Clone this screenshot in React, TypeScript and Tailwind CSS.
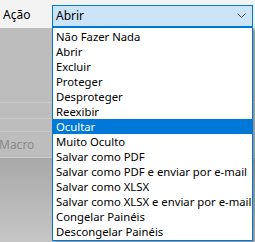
import React from "react";

const items = [
  "Não Fazer Nada",
  "Abrir",
  "Excluir",
  "Proteger",
  "Desproteger",
  "Reexibir",
  "Ocultar",
  "Muito Oculto",
  "Salvar como PDF",
  "Salvar como PDF e enviar por e-mail",
  "Salvar como XLSX",
  "Salvar como XLSX e enviar por e-mail",
  "Congelar Painéis",
  "Descongelar Painéis",
];

export default function App() {
  return (
    <div
      className="relative w-[255px] h-[242px] overflow-hidden bg-[#bdbdbd] text-[11.3px] text-black"
      style={{ fontFamily: '"Noto Sans", "Open Sans", sans-serif' }}
    >
      <div className="h-[28px] bg-[#f3f3f3] flex items-center">
        <span className="pl-[3px] pt-[2px] text-[12px]">Ação</span>
      </div>
      <div className="h-[74px]" />
      <div className="h-[16px] border-t border-[#c9c9c9]" />
      <div className="h-[13px] border-t border-[#c9c9c9]" />
      <div className="h-[27px] border-t border-[#c9c9c9] border-b flex items-center text-[#8a8a8a] text-[12px]">
        <span className="-ml-[1px]">Macro</span>
      </div>
      <div className="h-[84px] bg-gradient-to-b from-[#a9a9a9] to-[#c6c6c6]" />

      {/* combo box */}
      <div className="absolute left-[52px] top-[5px] w-[201px] h-[23px] bg-[#cce4f7] border border-[#0078d7] border-b-2 flex items-center justify-between pl-[3px] pr-[5px] text-[12px]">
        <span>Abrir</span>
        <svg width="9" height="6" viewBox="0 0 9 6" className="mr-[1px]">
          <path d="M0.5 0.5 L4.5 4.5 L8.5 0.5" fill="none" stroke="#505050" strokeWidth="1" />
        </svg>
      </div>

      {/* dropdown list */}
      <div className="absolute left-[52px] top-[28px] w-[201px] h-[213px] bg-white border border-t-0 border-[#0078d7] shadow-[2px_2px_2px_rgba(0,0,0,0.25)] pt-[1px]">
        {items.map((t) => (
          <div
            key={t}
            className={
              "h-[15px] leading-[15px] pl-[3px] whitespace-nowrap " +
              (t === "Ocultar" ? "bg-[#0078d7] text-white" : "")
            }
          >
            {t}
          </div>
        ))}
      </div>
    </div>
  );
}
